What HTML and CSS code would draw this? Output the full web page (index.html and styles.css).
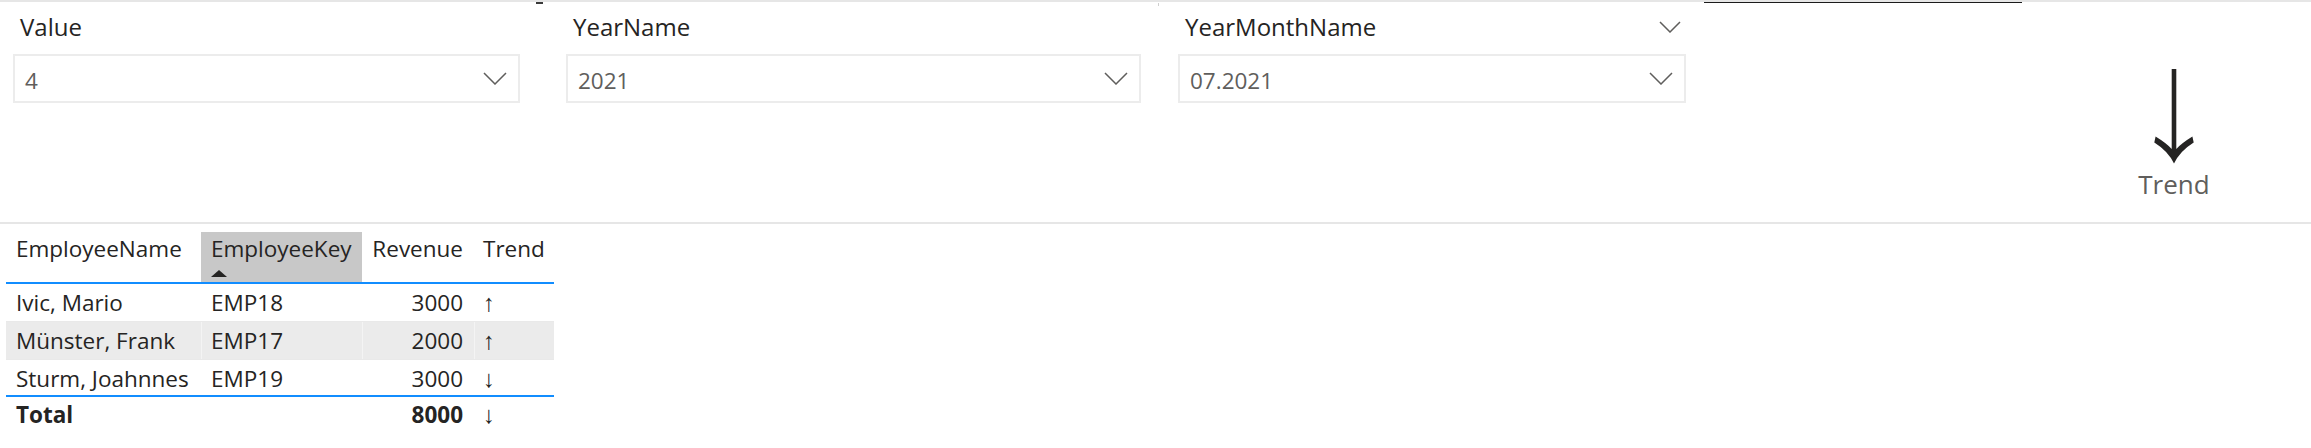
FILE: index.html
```html
<!DOCTYPE html>
<html lang="de">
<head>
<meta charset="utf-8">
<title>Report</title>
<link rel="stylesheet" href="styles.css">
</head>
<body>
<div class="page">
  <section class="top">
    <span class="mark mark-a"></span>
    <span class="mark mark-b"></span>
    <span class="mark mark-line"></span>

    <div class="slicer slicer-value">
      <div class="slicer-head"><span class="slicer-title">Value</span></div>
      <div class="dropdown">
        <span class="dropdown-value">4</span>
        <svg class="chev" width="24" height="13" viewBox="0 0 24 13"><polyline points="1,1 12,12 23,1" fill="none" stroke="#5f5e5c" stroke-width="1.5"/></svg>
      </div>
    </div>

    <div class="slicer slicer-year">
      <div class="slicer-head"><span class="slicer-title">YearName</span></div>
      <div class="dropdown">
        <span class="dropdown-value">2021</span>
        <svg class="chev" width="24" height="13" viewBox="0 0 24 13"><polyline points="1,1 12,12 23,1" fill="none" stroke="#5f5e5c" stroke-width="1.5"/></svg>
      </div>
    </div>

    <div class="slicer slicer-month">
      <div class="slicer-head">
        <span class="slicer-title">YearMonthName</span>
        <svg class="chev head-chev" width="22" height="12" viewBox="0 0 22 12"><polyline points="1,1 11,11 21,1" fill="none" stroke="#5f5e5c" stroke-width="1.5"/></svg>
      </div>
      <div class="dropdown">
        <span class="dropdown-value">07.2021</span>
        <svg class="chev" width="24" height="13" viewBox="0 0 24 13"><polyline points="1,1 12,12 23,1" fill="none" stroke="#5f5e5c" stroke-width="1.5"/></svg>
      </div>
    </div>

    <div class="card">
      <svg class="card-arrow" width="40" height="96" viewBox="0 0 40 96">
        <path d="M20 94.5 Q14 82 0.3 73.5 L1.6 67.6 Q12 74 17.7 80 L17.7 0 L22.3 0 L22.3 80 Q28 74 38.4 67.6 L39.7 73.5 Q26 82 20 94.5 Z" fill="#252423"/>
      </svg>
      <div class="card-label">Trend</div>
    </div>
  </section>

  <section class="table-wrap">
    <table class="matrix">
      <colgroup>
        <col class="c-name"><col class="c-key"><col class="c-rev"><col class="c-trend">
      </colgroup>
      <thead>
        <tr>
          <th><div class="th-label">EmployeeName</div><div class="sort-row"></div></th>
          <th class="sorted"><div class="th-label">EmployeeKey</div><div class="sort-row"><span class="sort-tri"></span></div></th>
          <th class="num"><div class="th-label">Revenue</div><div class="sort-row"></div></th>
          <th><div class="th-label">Trend</div><div class="sort-row"></div></th>
        </tr>
      </thead>
      <tbody>
        <tr>
          <td>Ivic, Mario</td><td>EMP18</td><td class="num">3000</td><td><span class="arrow">↑</span></td>
        </tr>
        <tr class="alt">
          <td>Münster, Frank</td><td>EMP17</td><td class="num">2000</td><td><span class="arrow">↑</span></td>
        </tr>
        <tr class="last">
          <td>Sturm, Joahnnes</td><td>EMP19</td><td class="num">3000</td><td><span class="arrow">↓</span></td>
        </tr>
      </tbody>
      <tfoot>
        <tr>
          <td class="total">Total</td><td></td><td class="num total">8000</td><td><span class="arrow">↓</span></td>
        </tr>
      </tfoot>
    </table>
  </section>
</div>
</body>
</html>
```

FILE: styles.css
```css
* { box-sizing: border-box; }

html, body {
  margin: 0;
  padding: 0;
  background: #ffffff;
}

body {
  font-family: "Open Sans", "Noto Sans", sans-serif;
  color: #252423;
  width: 2311px;
  height: 448px;
  overflow: hidden;
}

.top {
  position: relative;
  height: 224px;
  border-top: 2px solid #e6e6e6;
  border-bottom: 2px solid #e6e6e6;
  display: flex;
  align-items: flex-start;
}

.mark {
  position: absolute;
  display: block;
}
.mark-a {
  left: 536px;
  top: 0;
  width: 7px;
  height: 2px;
  background: #3a3a3a;
}
.mark-b {
  left: 1158px;
  top: 1px;
  width: 1px;
  height: 3px;
  background: #cfcfcf;
}
.mark-line {
  left: 1704px;
  top: 0;
  width: 318px;
  height: 1px;
  background: #1b1b1b;
}

.slicer {
  padding-top: 10px;
}
.slicer-value { margin-left: 13px; width: 507px; }
.slicer-year  { margin-left: 46px; width: 575px; }
.slicer-month { margin-left: 37px; width: 508px; }

.slicer-head {
  display: flex;
  align-items: center;
  justify-content: space-between;
  height: 30px;
  padding-left: 7px;
  padding-right: 5px;
}

.slicer-title {
  font-size: 24px;
  line-height: 30px;
  color: #252423;
  white-space: nowrap;
}

.head-chev { display: block; }

.dropdown {
  margin-top: 12px;
  height: 49px;
  border: 2px solid #ececec;
  display: flex;
  align-items: center;
  justify-content: space-between;
  padding: 0 11px 0 10px;
}

.dropdown-value {
  font-size: 22.5px;
  line-height: 30px;
  color: #605e5c;
  padding-top: 4px;
}

.chev { display: block; }

.card {
  margin-left: auto;
  width: 274px;
  padding-top: 67px;
  display: flex;
  flex-direction: column;
  align-items: center;
}

.card-arrow { display: block; }

.card-label {
  margin-top: 3px;
  font-size: 26px;
  line-height: 32px;
  color: #605e5c;
}

.table-wrap {
  padding: 8px 0 0 6px;
}

.matrix {
  border-collapse: separate;
  border-spacing: 0;
  table-layout: fixed;
  width: 548px;
  font-size: 22.5px;
  line-height: 30px;
  color: #252423;
}

.c-name  { width: 195px; }
.c-key   { width: 161px; }
.c-rev   { width: 112px; }
.c-trend { width: 80px; }

.matrix th {
  font-weight: normal;
  text-align: left;
  vertical-align: top;
  padding: 2px 10px 0 10px;
  border-bottom: 2px solid #118dff;
  white-space: nowrap;
}

.matrix th.sorted {
  background: #c8c8c8;
}

.th-label { height: 30px; }

.sort-row {
  height: 18px;
  padding-top: 6px;
}

.sort-tri {
  display: block;
  width: 0;
  height: 0;
  border-left: 8px solid transparent;
  border-right: 8px solid transparent;
  border-bottom: 7px solid #252423;
}

.matrix td {
  padding: 4px 10px 3px 10px;
  border-bottom: 1px solid #e9e9e9;
  white-space: nowrap;
}

.matrix td:last-child,
.matrix th:last-child {
  padding-left: 9px;
}

.matrix .num {
  text-align: right;
  padding-right: 11px;
}

.matrix tr.alt td {
  background: #ebebeb;
  box-shadow: inset 1px 0 0 #f4f4f4;
}
.matrix tr.alt td:first-child { box-shadow: none; }

.matrix tr.last td {
  padding-bottom: 1px;
  border-bottom: 2px solid #118dff;
}

.matrix tfoot td {
  padding-top: 3px;
  border-bottom: none;
}

.matrix .total {
  font-weight: bold;
}

.arrow {
  font-family: "Liberation Sans", Arial, sans-serif;
  font-size: 24px;
  color: #252423;
}
```
